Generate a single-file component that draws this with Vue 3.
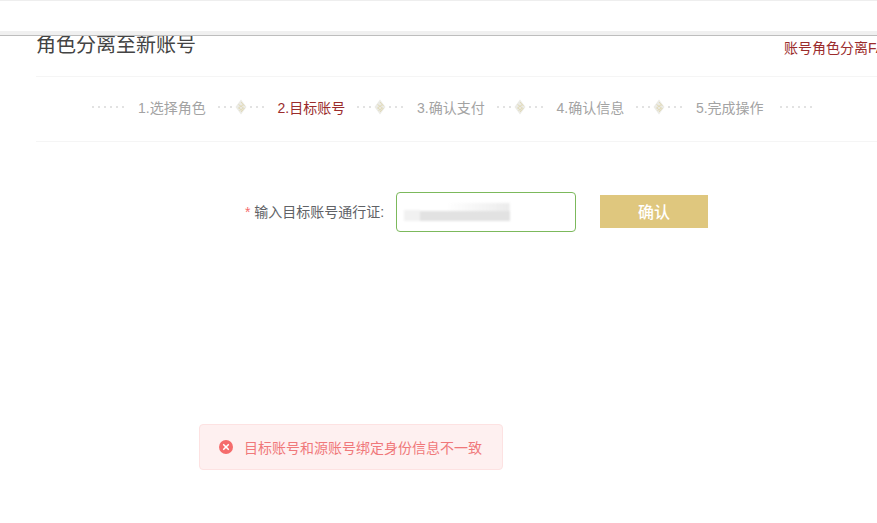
<script setup>
const steps = ['1.选择角色', '2.目标账号', '3.确认支付', '4.确认信息', '5.完成操作'];
const activeStep = 1;
</script>

<template>
  <div class="page">
    <header class="topbar"></header>
    <main class="content">
      <div class="title-row">
        <h1 class="title">角色分离至新账号</h1>
        <a class="faq">账号角色分离FAQ</a>
      </div>

      <div class="steps">
        <span class="dots edge"></span>
        <template v-for="(s, i) in steps" :key="s">
          <span class="step" :class="{ active: i === activeStep }">{{ s }}</span>
          <span v-if="i < steps.length - 1" class="sep">
            <span class="dots short"></span>
            <svg class="knot" viewBox="0 0 12 16" width="12" height="16">
              <path d="M6 .5 11.5 8 6 15.5.5 8Z" fill="#ebebe6" />
              <path d="M3.5 5.5 8.5 9 4.5 11.5M8.5 5.5 3.5 9 7.5 11.5M6 3 9.5 7M6 13 9.5 9" fill="none" stroke="#e2dab8" stroke-width="1" />
            </svg>
            <span class="dots short"></span>
          </span>
        </template>
        <span class="dots edge last"></span>
      </div>

      <form class="form-row" @submit.prevent>
        <label class="label"><i class="star">*</i> 输入目标账号通行证:</label>
        <div class="input-box">
          <span class="smudge"></span>
        </div>
        <button class="confirm" type="button">确认</button>
      </form>
    </main>

    <div class="message">
      <svg class="msg-icon" viewBox="0 0 14 14" width="14" height="14">
        <circle cx="7" cy="7" r="7" fill="#f56c6c" />
        <path d="M4.7 4.7 9.3 9.3M9.3 4.7 4.7 9.3" stroke="#fff" stroke-width="1.6" stroke-linecap="round" />
      </svg>
      <span>目标账号和源账号绑定身份信息不一致</span>
    </div>
  </div>
</template>

<style scoped>
.page {
  position: relative;
  width: 877px;
  height: 523px;
  overflow: hidden;
  background: #fff;
  font-family: "Liberation Sans", "Noto Sans CJK SC", sans-serif;
}
.topbar {
  position: relative;
  z-index: 2;
  box-sizing: border-box;
  height: 35px;
  background: #fff;
  border-top: 1px solid #eeeeee;
  border-bottom: 4px solid #f0f0f0;
  box-shadow: 0 1px 0 #bdbdbd;
}
.content {
  width: 860px;
  margin-left: 36px;
  padding-top: 1px;
}
.title-row {
  display: flex;
  justify-content: space-between;
  align-items: flex-start;
  height: 40px;
  border-bottom: 1px solid #f5f5f5;
}
.title {
  margin: 0;
  font-size: 20px;
  font-weight: 400;
  line-height: 18px;
  color: #444;
}
.faq {
  font-size: 14px;
  line-height: 24px;
  color: #9b2c2c;
  white-space: nowrap;
}
.steps {
  box-sizing: border-box;
  display: flex;
  align-items: center;
  gap: 12px;
  height: 65px;
  padding: 0 0 4px 56px;
  border-bottom: 1px solid #f5f5f5;
}
.step {
  font-size: 14px;
  color: #a3a3a3;
  white-space: nowrap;
}
.step.active {
  color: #9b2c2c;
}
.dots {
  display: block;
  height: 2px;
  background-image: radial-gradient(circle, #e2e2e2 0.9px, transparent 1px);
  background-size: 6px 2px;
  background-position: -2px 0;
  background-repeat: repeat-x;
}
.dots.edge {
  width: 34px;
  flex: none;
}
.dots.last {
  margin-left: 4px;
}
.dots.short {
  width: 16px;
}
.dots.short:first-child {
  width: 14px;
}
.sep {
  display: flex;
  align-items: center;
  gap: 3px;
  width: 47.8px;
  flex: none;
}
.knot {
  flex: none;
}
.form-row {
  display: flex;
  align-items: center;
  margin-top: 50px;
  padding-left: 209px;
}
.label {
  width: 139px;
  margin-bottom: 2px;
  font-size: 14px;
  color: #606266;
  white-space: nowrap;
}
.star {
  font-style: normal;
  color: #f56c6c;
}
.input-box {
  box-sizing: border-box;
  display: flex;
  align-items: center;
  width: 180px;
  height: 40px;
  margin-left: 12px;
  padding-left: 7px;
  border: 1px solid #7cb95c;
  border-radius: 4px;
  background: #fff;
}
.smudge {
  display: block;
  width: 106px;
  height: 18px;
  background:
    linear-gradient(#e2e2e2, #e2e2e2) 16px 8px / 90px 10px no-repeat,
    linear-gradient(90deg, transparent, #ececec) right top / 60% 8px no-repeat,
    linear-gradient(#f1f1f1, #f1f1f1) 0 7px / 16px 11px no-repeat;
  filter: blur(1px);
}
.confirm {
  width: 108px;
  height: 33px;
  margin-left: 24px;
  margin-bottom: 2px;
  border: 0;
  background: #dfc77e;
  color: #fff;
  font-family: inherit;
  font-size: 16px;
  font-weight: 500;
}
.message {
  position: absolute;
  left: 199px;
  top: 424px;
  box-sizing: border-box;
  display: flex;
  align-items: center;
  gap: 11px;
  width: 304px;
  height: 46px;
  padding-left: 19px;
  border: 1px solid #fde2e2;
  border-radius: 4px;
  background: #fef0f0;
  font-size: 14px;
  color: #f0787a;
}
.msg-icon {
  flex: none;
}
</style>
